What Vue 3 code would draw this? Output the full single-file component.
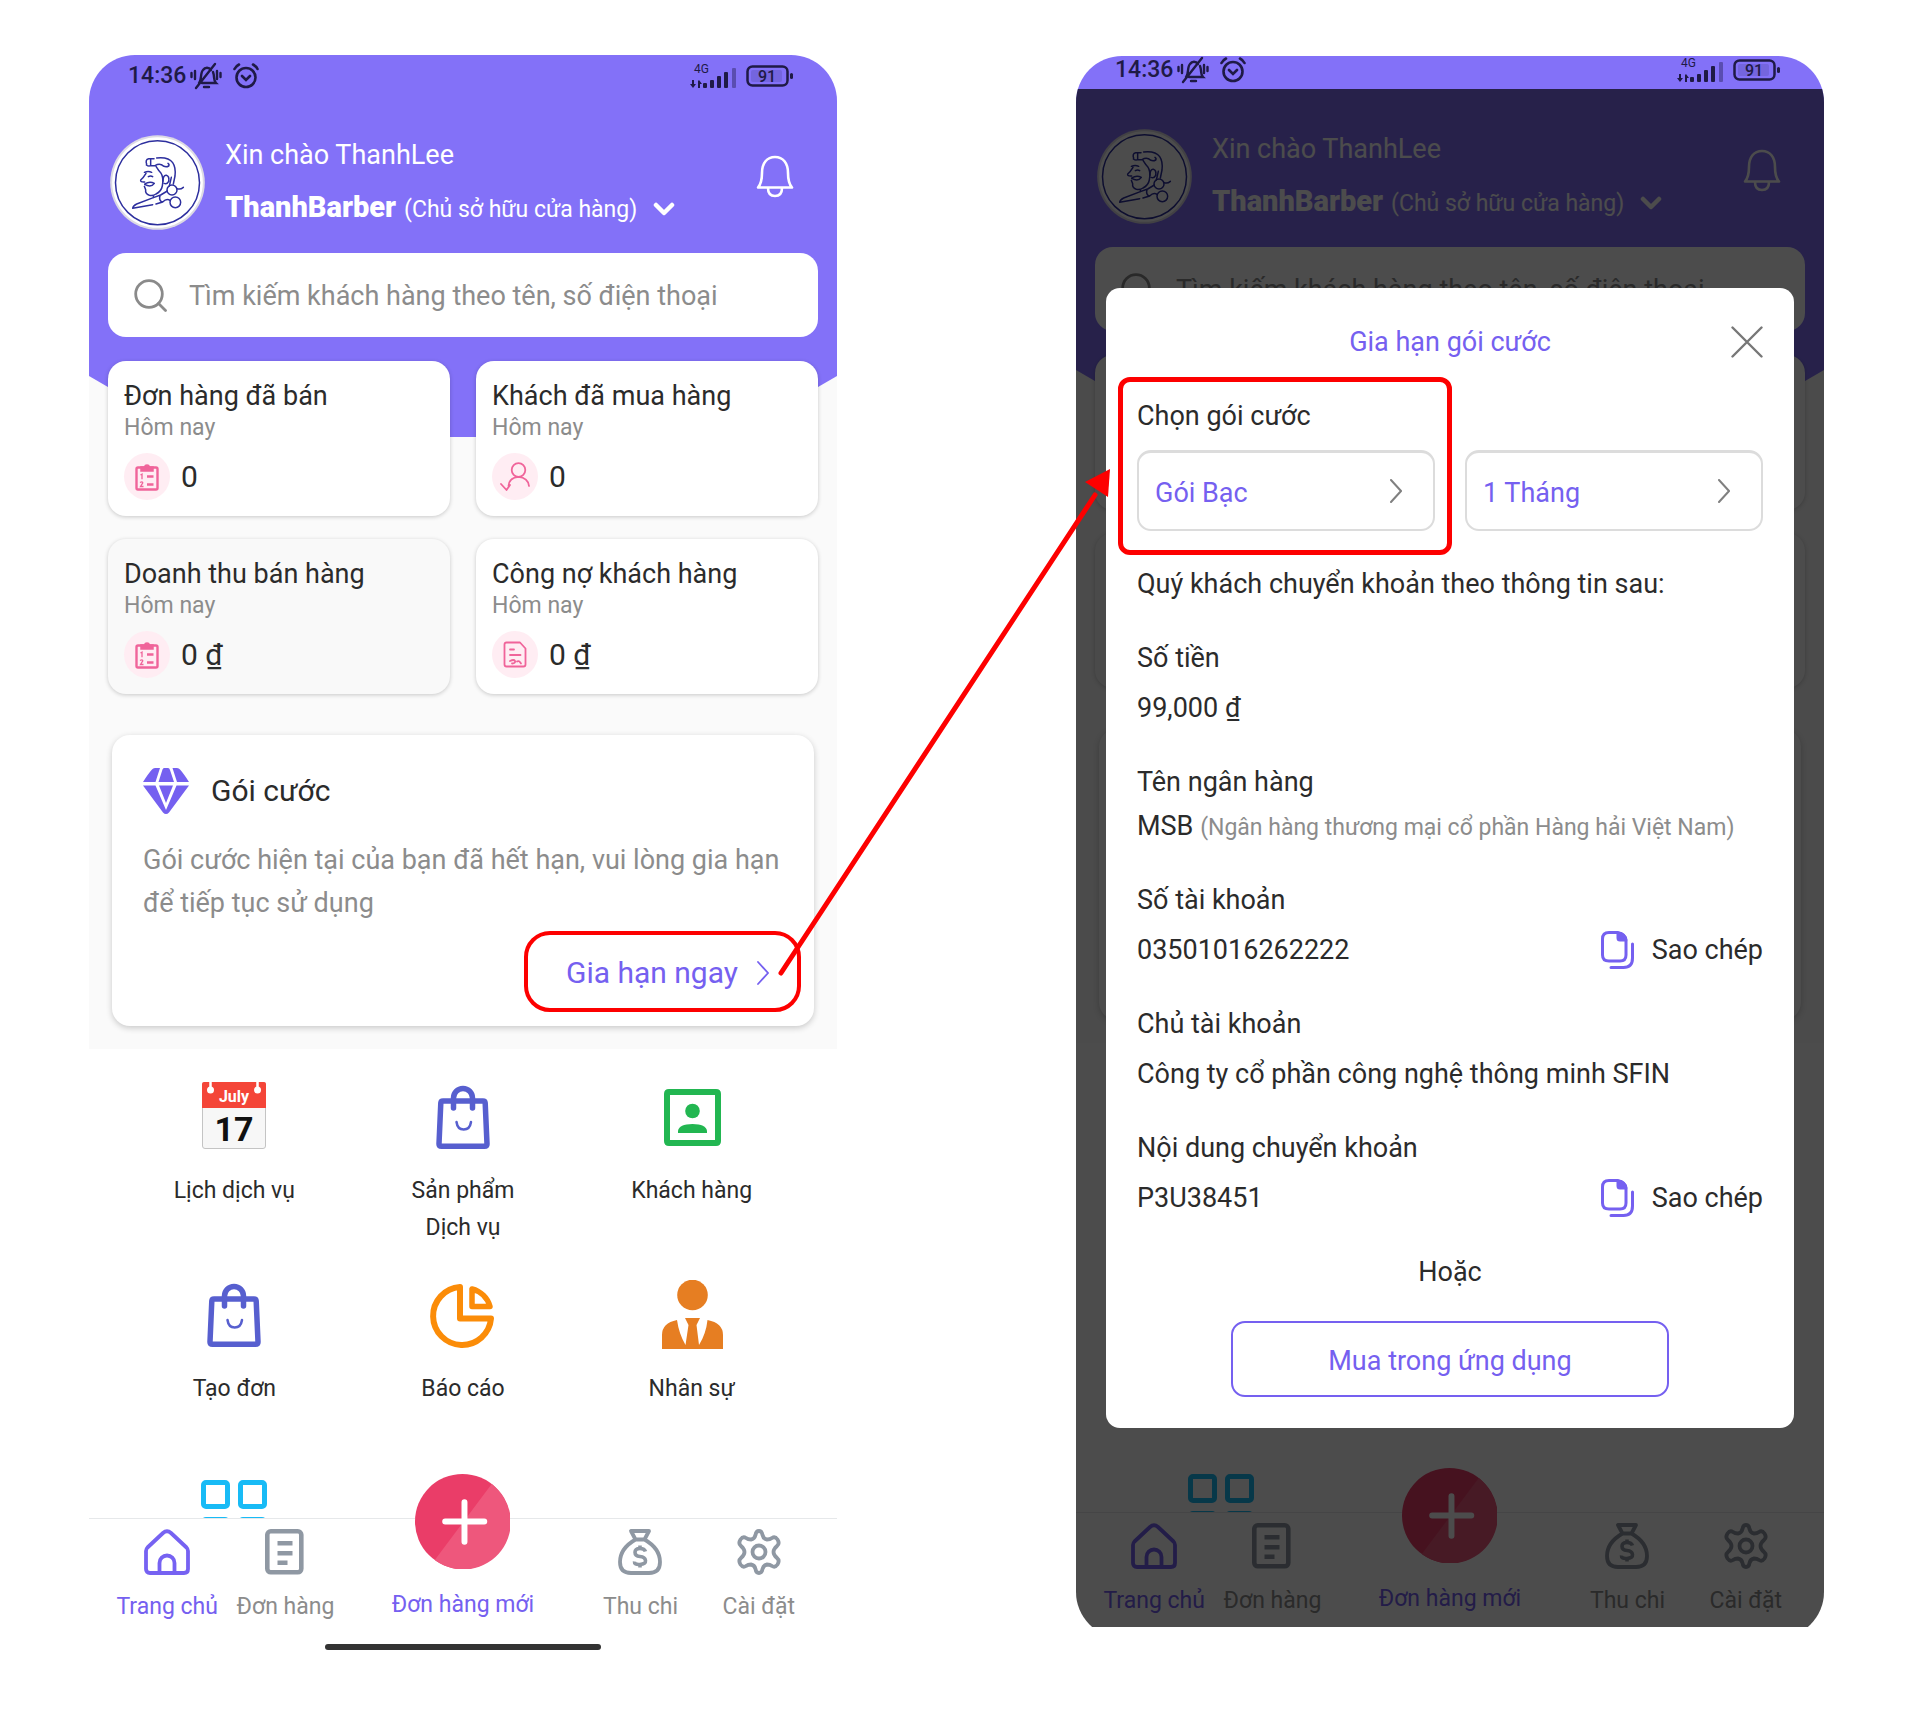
<script setup>
import { ref } from 'vue'

// 1. two screens: home, and home with the renewal dialog open
const screens = ref([
  { id: 'main', dialog: false },
  { id: 'renew', dialog: true }
])

// 2. today's numbers
const stats = ref([
  { title: 'Đơn hàng đã bán', value: '0', icon: 'board' },
  { title: 'Khách đã mua hàng', value: '0', icon: 'buyer' },
  { title: 'Doanh thu bán hàng', value: '0 ₫', icon: 'board', pressed: true },
  { title: 'Công nợ khách hàng', value: '0 ₫', icon: 'debt' }
])

// 3. shortcuts
const menu = ref([
  { icon: 'calendar', lines: ['Lịch dịch vụ'] },
  { icon: 'bag', lines: ['Sản phẩm', 'Dịch vụ'] },
  { icon: 'contact', lines: ['Khách hàng'] },
  { icon: 'bag', lines: ['Tạo đơn'] },
  { icon: 'pie', lines: ['Báo cáo'] },
  { icon: 'staff', lines: ['Nhân sự'] },
  { icon: 'grid', lines: [] }
])

// 4. bottom tabs
const tabs = ref([
  { icon: 'house', label: 'Trang chủ', active: true },
  { icon: 'order', label: 'Đơn hàng' },
  { icon: 'plus', label: 'Đơn hàng mới', active: true },
  { icon: 'money', label: 'Thu chi' },
  { icon: 'gear', label: 'Cài đặt' }
])

// 5. transfer information
const transfer = ref([
  { label: 'Số tiền', value: '99,000 ₫' },
  { label: 'Tên ngân hàng', value: 'MSB', note: '(Ngân hàng thương mại cổ phần Hàng hải Việt Nam)' },
  { label: 'Số tài khoản', value: '03501016262222', copy: true },
  { label: 'Chủ tài khoản', value: 'Công ty cổ phần công nghệ thông minh SFIN' },
  { label: 'Nội dung chuyển khoản', value: 'P3U38451', copy: true }
])

const plan = ref('Gói Bạc')
const period = ref('1 Tháng')
</script>

<template>
  <main class="board">
    <div v-for="s in screens" :key="s.id" class="frame" :class="s.id">
      <section class="phone">
        <div class="status">
          <span class="time">14:36</span>
          <svg class="st-mute" viewBox="0 0 32 28" fill="none" stroke="currentColor" stroke-width="2.4" stroke-linecap="round">
            <path d="M9 21c3-3 1-10 4-13 2-3 6-3 8 0M23 10c2 5 0 8 3 11H12M25 2L6 26" />
            <path d="M14 25h5M5 9v8M1.500 11v4M27 9v8M30.500 11v4" />
          </svg>
          <svg class="st-alarm" viewBox="0 0 26 26" fill="none" stroke="currentColor" stroke-width="2.600" stroke-linecap="round">
            <circle cx="13" cy="14.500" r="9.500" />
            <path d="M9 13l4 4 4-4M1.500 6C2.500 4 4 2.500 6 1.500M24.500 6C23.500 4 22 2.500 20 1.500" />
          </svg>
          <svg class="st-signal" viewBox="0 0 48 26" fill="currentColor">
            <text x="4" y="10" font-size="12">4G</text>
            <path d="M2 17h2v4h2l-3 4-3-4h2zM8 25h2v-4h2l-3-4-1 1z" />
            <rect x="13" y="20" width="4" height="5" rx="1" />
            <rect x="20" y="17" width="4" height="8" rx="1" />
            <rect x="27" y="13" width="4" height="12" rx="1" />
            <rect x="34" y="9" width="4" height="16" rx="1" />
            <rect x="42" y="5" width="4" height="20" rx="1" opacity=".4" />
          </svg>
          <svg class="st-battery" viewBox="0 0 48 22">
            <rect x="1.500" y="1.500" width="40" height="19" rx="5" fill="none" stroke="currentColor" stroke-width="2.500" />
            <rect x="5" y="5" width="31" height="12" rx="2" fill="currentColor" opacity=".14" />
            <rect x="44" y="8" width="3" height="6" rx="1.500" fill="currentColor" />
            <text x="21" y="17" font-size="16" font-weight="500" text-anchor="middle" fill="currentColor">91</text>
          </svg>
        </div>

        <div class="today">
          <header class="hello">
            <svg class="avatar" viewBox="30 45 285 285" fill="none" stroke="#2d2f9e" stroke-width="4.500" stroke-linecap="round" stroke-linejoin="round">
              <circle cx="172.500" cy="187.500" r="142" fill="#dcdae4" stroke="none" />
              <circle cx="172.500" cy="187.500" r="136" fill="#fff" stroke="none" />
              <circle cx="172.500" cy="188" r="126" />
              <path d="M140 133Q135 118 146 116H162M170 114Q205 110 218 128Q228 142 225 168L220 192M152 117V136M139 135Q146 140 152 137H165Q175 131 184 134Q196 144 206 138Q209 133 204 130" />
              <path d="M168 139Q176 152 182 158Q192 172 187 198Q184 214 168 222Q160 228 148 226Q135 222 137 209L133 199" />
              <path d="M133 157Q145 152 155 157M145 170Q152 166 158 170M138 160Q131 172 122 180Q120 187 134 186M134 192Q149 182 163 190Q153 204 134 193" />
              <path d="M189 184Q189 165 199 166Q209 169 206 184Q201 194 192 190M214 172L208 198" />
              <circle cx="216" cy="210" r="15" />
              <circle cx="226" cy="247" r="16" />
              <path d="M231 206Q241 210 250 202M202 213L182 225L160 233L110 252Q99 257 98 265L158 254M168 252L188 246Q200 234 211 242M180 227Q176 240 186 246M160 233V228" />
            </svg>
            <div class="who">
              <p class="greet">Xin chào ThanhLee</p>
              <button type="button" class="shop">
                <strong>ThanhBarber</strong>
                <span>(Chủ sở hữu cửa hàng)</span>
                <svg viewBox="0 0 22 14" fill="none" stroke="currentColor" stroke-width="4.500" stroke-linecap="round" stroke-linejoin="round">
                  <path d="M3 3l8 8 8-8" />
                </svg>
              </button>
            </div>
            <button type="button" class="bell">
              <svg viewBox="0 0 38 43" fill="none" stroke="currentColor" stroke-width="2.600" stroke-linejoin="round">
                <path d="M2 32.500Q6 28 6 18C6 8 11 2 19 2S32 8 32 18Q32 28 36 32.500ZM12 33Q12 41 19 41T26 33" />
              </svg>
            </button>
          </header>

          <label class="search">
            <svg viewBox="0 0 33 33" fill="none" stroke="#8a8a8a" stroke-width="2.800" stroke-linecap="round">
              <circle cx="15" cy="15" r="13.300" />
              <path d="M24.500 24.500l7 7" />
            </svg>
            <input type="text" placeholder="Tìm kiếm khách hàng theo tên, số điện thoại" />
          </label>

          <div class="stats">
            <article v-for="item in stats" :key="item.title" class="stat" :class="{ pressed: item.pressed }">
              <h3>{{ item.title }}</h3>
              <p class="day">Hôm nay</p>
              <div class="num">
                <span class="dot">
                  <svg v-if="item.icon === 'board'" viewBox="0 0 24 28" fill="none" stroke="#f0649a" stroke-width="2.400">
                    <rect x="1.500" y="4.500" width="21" height="22" rx="1.500" />
                    <path d="M6 4h3.500a2.600 2.600 0 0 1 5 0H18v4H6z" fill="#f0649a" stroke-width="1.500" />
                    <path d="M12 13.500h6.500M12 21.500h6.500" />
                    <path d="M5.500 12l1.500-.8v5M5 19.500q2.500-1.500 2.800.3L5.500 23.500h3" stroke-width="1.300" />
                  </svg>
                  <svg v-else-if="item.icon === 'buyer'" class="wide" viewBox="0 0 30 30" fill="none" stroke="#f0649a" stroke-width="1.800" stroke-linecap="round" stroke-linejoin="round">
                    <circle cx="18.500" cy="8" r="6.800" />
                    <path d="M8.500 24Q9 15.500 18.500 14.800Q28 15.500 29 24M1 22l5.500 6 3.500-5" />
                  </svg>
                  <svg v-else viewBox="0 0 24 27" fill="none" stroke="#f0649a" stroke-width="1.800" stroke-linecap="round" stroke-linejoin="round">
                    <path d="M3.500 1.500H17l5.500 6V23.500q0 2-2 2h-17q-2 0-2-2v-20q0-2 2-2z" />
                    <path d="M7 8.500h4M7 14h10.500M7 20q4-2 5 0t-3 2.500M14 20.500q2-1.500 4 2" />
                  </svg>
                </span>
                <b>{{ item.value }}</b>
              </div>
            </article>
          </div>

          <article class="package">
            <div class="package-head">
              <svg viewBox="0 0 46 46" fill="#7560f0">
                <path d="M9 1.500Q10 0 12 0H17L12.500 14H0Q5 6 9 1.500zM21 0h4q1.500 0 2 2l4 12H15.500L19.500 1.500Q20 0 21 0zM29.500 0H34q2 0 3 1.500Q41 6 46 14H34zM0 17.500H12.500L23 42l10.500-24.500H46L26 44.500Q23 47.500 20 44.500zM16 17.500H30L23 35z" />
              </svg>
              <h2>Gói cước</h2>
            </div>
            <p>Gói cước hiện tại của bạn đã hết hạn, vui lòng gia hạn để tiếp tục sử dụng</p>
            <button type="button" class="renew-btn">
              Gia hạn ngay
              <svg viewBox="0 0 12 24" fill="none" stroke="currentColor" stroke-width="1.800" stroke-linecap="round">
                <path d="M1 1l10 11L1 23" />
              </svg>
              <i class="mark"></i>
            </button>
          </article>
        </div>

        <div class="menu">
          <a v-for="(m, i) in menu" :key="i" href="#" class="entry">
            <svg v-if="m.icon === 'calendar'" viewBox="0 0 70 70">
              <rect x="3.500" y=".5" width="63" height="66" rx="2.500" fill="#f7f7f7" stroke="#c4c4c4" />
              <path d="M3 2q0-2 2-2h60q2 0 2 2v24H3z" fill="#f44538" />
              <path d="M11.500 0v7M58.500 0v7" stroke="#fff" stroke-width="2.500" />
              <circle cx="11.500" cy="8" r="3.500" fill="#fff" />
              <circle cx="58.500" cy="8" r="3.500" fill="#fff" />
              <text x="35" y="20" font-size="16" font-weight="700" text-anchor="middle" fill="#fff">July</text>
              <text x="35" y="59" font-size="34" font-weight="700" text-anchor="middle" fill="#111">17</text>
            </svg>
            <svg v-else-if="m.icon === 'bag'" viewBox="0 0 70 70" fill="none" stroke="#575fcf" stroke-width="5.500" stroke-linecap="round" stroke-linejoin="round">
              <path d="M15 19h40q2 0 2.200 2L59 62q0 2.200-2.500 2.200h-43Q11 64.200 11 62l1.800-41q.2-2 2.200-2z" />
              <path d="M25.500 26V16a9.500 9.500 0 0 1 19 0v10" />
              <path d="M28.500 40q1 7.500 7.200 7.500T43 40" stroke-width="2.500" />
            </svg>
            <svg v-else-if="m.icon === 'contact'" viewBox="0 0 70 70" fill="#22b651">
              <path fill-rule="evenodd" d="M12 7h47q5 0 5 5v47q0 5-5 5H12q-5 0-5-5V12q0-5 5-5zM13 13v45h45V13z" />
              <circle cx="35.500" cy="29" r="7.300" />
              <path d="M21 51v-2q1-7 14.500-7T50 49v2z" />
            </svg>
            <svg v-else-if="m.icon === 'pie'" viewBox="0 0 70 70" fill="none" stroke="#fb8c08" stroke-width="6" stroke-linejoin="round">
              <path d="M32 7v31.500h31A29 29 0 1 1 32 7z" />
              <path d="M44 9v17.500h18A25 25 0 0 0 44 9z" stroke-width="5.500" />
            </svg>
            <svg v-else-if="m.icon === 'staff'" viewBox="0 0 70 70" fill="#e67e22">
              <circle cx="35.500" cy="15" r="15.300" />
              <path d="M5 69V55Q5 43 20 40Q22 54 28.500 65L31.500 45 28 38H43L39.500 45 42 65Q49 54 50.500 40Q66 43 66 55V69z" />
            </svg>
            <svg v-else viewBox="0 0 70 70" fill="none" stroke="#18bbf6" stroke-width="5">
              <rect x="4.500" y="4.500" width="24" height="24" rx="2.500" />
              <rect x="41.500" y="4.500" width="24" height="24" rx="2.500" />
              <rect x="4.500" y="41.500" width="24" height="24" rx="2.500" />
              <rect x="41.500" y="41.500" width="24" height="24" rx="2.500" />
            </svg>
            <span v-for="line in m.lines" :key="line">{{ line }}</span>
          </a>
        </div>

        <nav class="tabs">
          <a v-for="t in tabs" :key="t.label" href="#" class="tab" :class="{ active: t.active }">
            <svg v-if="t.icon === 'house'" viewBox="0 0 46 46" fill="none" stroke="#7662f2" stroke-width="3.800" stroke-linejoin="round">
              <path d="M2 22q0-2 1.500-3.500L19 4q4-3.500 8 0l15.500 14.500Q44 20 44 22v18q0 4-4 4H6q-4 0-4-4zM15.500 44V34a7.500 7.500 0 0 1 15 0v10" />
            </svg>
            <svg v-else-if="t.icon === 'order'" viewBox="0 0 46 46" fill="none" stroke="#8f98a3" stroke-width="4.600">
              <rect x="5.300" y="2.300" width="34" height="41" rx="3.500" />
              <path d="M15.500 14.300h15M15.500 24.300h15M15.500 33.700h10" />
            </svg>
            <svg v-else-if="t.icon === 'plus'" class="fab" viewBox="0 0 96 96">
              <circle cx="48" cy="48" r="48" fill="#ea3d68" />
              <path d="M77.500 10A48 48 0 0 1 20 87z" fill="#ee577c" />
              <path d="M50 28.500v40M30.500 48h39.500" stroke="#fff" stroke-width="6" stroke-linecap="round" />
            </svg>
            <svg v-else-if="t.icon === 'money'" viewBox="0 0 46 46" fill="none" stroke="#8f98a3" stroke-width="3.800" stroke-linejoin="round">
              <path d="M14 2h18l-4.500 8.500h-9zM18.500 10.500C9 16 3 24 3 33q0 11 11 11h18q11 0 11-11c0-9-6-17-15.500-22.500" />
              <path d="M28.500 22.500q-1-3-5.500-3-5 0-5 3.800T23 27.500t5.500 4-5.500 4-5.500-3M23 16.500v3M23 35.500v3" stroke-width="3.600" />
            </svg>
            <svg v-else viewBox="0 0 46 46" fill="none" stroke="#8f98a3" stroke-width="3.800" stroke-linejoin="round">
              <path d="M19.500 6Q20 2 23 2t3.500 4q1 4 4.500 4.500 3 0 5-1.500 3-2 5.500 1.500 2.500 4-.5 6.500-3.500 3-3.500 6t3.500 6q3 2.500.5 6.500Q39 39 36 37q-2-1.500-5-1.500-3.500.5-4.500 4.500-.5 4-3.500 4t-3.500-4q-1-4-4.500-4.500-3 0-5 1.500-3 2-5.500-1.500-2.500-4 .5-6.500 3.500-3 3.500-6T5 17q-3-2.500-.5-6.500Q7 7 10 9q2 1.500 5 1.500 3.500-.5 4.500-4.500z" />
              <circle cx="23" cy="23" r="6.500" />
            </svg>
            <span>{{ t.label }}</span>
          </a>
        </nav>
        <div v-if="!s.dialog" class="home-bar"></div>

        <div v-if="s.dialog" class="mask">
          <form class="dialog" @submit.prevent>
            <div class="dialog-head">
              <h2>Gia hạn gói cước</h2>
              <button type="button" class="close">
                <svg viewBox="0 0 32 32" fill="none" stroke="#777" stroke-width="2.400" stroke-linecap="round">
                  <path d="M1.500 1.500l29 29M30.500 1.500l-29 29" />
                </svg>
              </button>
            </div>

            <div class="choose">
              <div class="choice">
                <label id="plan-label" for="plan">Chọn gói cước</label>
                <div class="picker">
                  <select id="plan" v-model="plan">
                    <option>Gói Bạc</option>
                  </select>
                  <svg viewBox="0 0 12 24" fill="none" stroke="#808080" stroke-width="2" stroke-linecap="round">
                    <path d="M1 1l10 11L1 23" />
                  </svg>
                </div>
                <i class="mark"></i>
              </div>
              <div class="choice">
                <div class="picker">
                  <select id="period" v-model="period" aria-labelledby="plan-label">
                    <option>1 Tháng</option>
                  </select>
                  <svg viewBox="0 0 12 24" fill="none" stroke="#808080" stroke-width="2" stroke-linecap="round">
                    <path d="M1 1l10 11L1 23" />
                  </svg>
                </div>
              </div>
            </div>

            <p class="intro">Quý khách chuyển khoản theo thông tin sau:</p>

            <div v-for="row in transfer" :key="row.label" class="info" :class="{ tight: row.note }">
              <p>{{ row.label }}</p>
              <div class="info-value">
                <p>{{ row.value }} <small v-if="row.note">{{ row.note }}</small></p>
                <button v-if="row.copy" type="button" class="copy">
                  <svg viewBox="0 0 33 38" fill="none" stroke="#7560f0" stroke-width="3" stroke-linecap="round" stroke-linejoin="round">
                    <path d="M8 1.500h8.500Q25 3 25 10v14q0 6-6 6H8q-6.500 0-6.500-6V8q0-6.500 6.500-6.500z" />
                    <path d="M17 2v5q0 2 2 2h6Q24 3 17 2z" fill="#7560f0" />
                    <path d="M31.500 13v14q0 9.500-9 9.500H10" />
                  </svg>
                  Sao chép
                </button>
              </div>
            </div>

            <p class="or">Hoặc</p>
            <button type="submit" class="buy">Mua trong ứng dụng</button>
          </form>
        </div>
      </section>
    </div>

    <!-- from the renew button to the plan picker -->
    <svg class="arrow" viewBox="0 0 338 516" fill="#fd0000">
      <path d="M5 508L319 30" stroke="#fd0000" stroke-width="5" stroke-linecap="round" />
      <path d="M334 4l-2 28-23-15z" />
    </svg>
  </main>
</template>

<style>
body {
  margin: 0;
  background: #fff;
}
</style>

<style scoped>
.board {
  position: relative;
  display: grid;
  grid-template-columns: 1fr 1fr;
  gap: 239px;
  align-items: start;
  padding: 55px 96px 56px 89px;
  font-family: Roboto, 'Noto Sans', sans-serif;
  font-size: 27px;
  line-height: 34px;
  color: #2b2b2b;
}
h2,
h3,
p {
  margin: 0;
  font-size: inherit;
  font-weight: 400;
}
svg {
  display: block;
  flex: none;
}
button {
  padding: 0;
  border: 0;
  background: none;
  font: inherit;
  color: inherit;
  cursor: pointer;
}
a {
  color: inherit;
  text-decoration: none;
}
.frame {
  overflow: hidden;
}
.phone {
  position: relative;
  overflow: hidden;
  border-radius: 46px;
  background: #fff;
}
.main .phone {
  border-radius: 46px 46px 0 0;
}
.home-bar {
  width: 276px;
  height: 6px;
  margin: 0 auto;
  border-radius: 3px;
  background: #333;
}

/* second screen is scrolled a little and cut at the bottom */
.renew {
  margin-top: 1px;
}
.renew .phone {
  margin-bottom: -11px;
}
.renew .status {
  margin-top: -7px;
}

.status {
  display: flex;
  align-items: center;
  box-sizing: border-box;
  height: 40px;
  padding: 2px 43px 0 39px;
  background: #8371f8;
  color: #1f1a46;
}
.time {
  font-size: 23px;
  font-weight: 500;
}
.st-mute {
  width: 32px;
  margin-left: 4px;
}
.st-alarm {
  width: 26px;
  margin-left: 11px;
}
.st-signal {
  width: 48px;
  margin-left: auto;
}
.st-battery {
  width: 48px;
  margin-left: 8px;
}

.today {
  position: relative;
  z-index: 0;
  padding: 40px 19px 23px;
  background: #fafafa;
}
.today::before {
  content: '';
  position: absolute;
  z-index: -1;
  top: 0;
  left: 0;
  right: 0;
  height: 342px;
  background: #8371f8;
  clip-path: polygon(0 0, 100% 0, 100% 281px, calc(100% - 105px) 100%, 105px 100%, 0 281px);
}
.hello {
  display: flex;
  align-items: center;
  padding: 0 24px 0 2px;
  color: #fff;
}
.avatar {
  width: 95px;
  height: 95px;
}
.who {
  flex: 1;
  display: flex;
  flex-direction: column;
  align-items: flex-start;
  gap: 16px;
  margin-left: 20px;
  line-height: 36px;
}
.shop {
  display: flex;
  align-items: baseline;
  gap: 8px;
}
.shop strong {
  font-size: 29px;
  font-weight: 900;
}
.shop span {
  font-size: 23px;
}
.shop svg {
  width: 22px;
  margin-left: 8px;
  align-self: center;
}
.bell {
  align-self: flex-start;
  margin-top: 20px;
}
.bell svg {
  width: 38px;
}
.search {
  display: flex;
  align-items: center;
  gap: 22px;
  height: 84px;
  margin-top: 23px;
  padding: 0 26px;
  border-radius: 18px;
  background: #fff;
}
.search svg {
  width: 33px;
}
.search input {
  flex: 1;
  min-width: 0;
  padding: 2px 0 0;
  border: 0;
  outline: 0;
  background: none;
  font: inherit;
}
.search input::placeholder {
  color: #8c8c8c;
  opacity: 1;
}

.stats {
  display: grid;
  grid-template-columns: 1fr 1fr;
  gap: 23px 26px;
  margin-top: 24px;
}
.stat {
  padding: 18px 16px 16px;
  border-radius: 18px;
  background: #fff;
  box-shadow: 0 1px 4px rgba(0, 0, 0, 0.2);
}
.pressed {
  background: #f9f9f9;
}
.day {
  font-size: 23px;
  line-height: 30px;
  color: #8c8c8c;
}
.num {
  display: flex;
  align-items: center;
  gap: 11px;
  margin-top: 10px;
}
.num b {
  font-size: 30px;
  font-weight: 400;
}
.dot {
  display: flex;
  align-items: center;
  justify-content: center;
  width: 46px;
  height: 47px;
  border-radius: 50%;
  background: #ffedf3;
}
.dot svg {
  width: 24px;
}
.dot .wide {
  width: 30px;
}

.package {
  margin: 41px 4px 0;
  padding: 33px 31px 35px;
  border-radius: 18px;
  background: #fff;
  box-shadow: 0 2px 6px rgba(0, 0, 0, 0.2);
}
.package-head {
  display: flex;
  align-items: center;
  gap: 22px;
  font-size: 30px;
}
.package-head svg {
  width: 46px;
}
.package p {
  margin-top: 25px;
  line-height: 43px;
  color: #8c8c8c;
}
.renew-btn {
  position: relative;
  display: flex;
  align-items: center;
  gap: 19px;
  margin: 30px 14px 0 auto;
  font-size: 30px;
  line-height: 36px;
  color: #7560f0;
}
.renew-btn svg {
  width: 12px;
}
.mark {
  position: absolute;
  box-sizing: border-box;
  border: 4px solid #fd0000;
  pointer-events: none;
}
.renew-btn .mark {
  inset: -24px -32px -21px -42px;
  border-radius: 26px;
}

.menu {
  display: grid;
  grid-template-columns: repeat(3, 1fr);
  grid-auto-rows: 198px;
  box-sizing: border-box;
  height: 469px;
  padding: 33px 31px 0;
  overflow: hidden;
}
.entry {
  display: flex;
  flex-direction: column;
  align-items: center;
  font-size: 23px;
  line-height: 37px;
}
.entry svg {
  width: 70px;
  margin-bottom: 20px;
}
.tabs {
  position: relative;
  display: grid;
  grid-template-columns: 1fr 1fr 2fr 1fr 1fr;
  box-sizing: border-box;
  height: 126px;
  padding: 10px 19px 0;
  border-top: 1px solid #e6e8ea;
  background: #fff;
}
.tab {
  display: flex;
  flex-direction: column;
  align-items: center;
  gap: 17px;
  font-size: 23px;
  line-height: 30px;
  color: #8c8c8c;
  white-space: nowrap;
}
.tab svg {
  width: 46px;
}
.tab .fab {
  width: 95px;
  margin-top: -55px;
  margin-bottom: 4px;
}
.tab.active {
  color: #7560f0;
}

.mask {
  position: absolute;
  inset: 33px 0 0;
  padding: 199px 30px 0;
  background: rgba(0, 0, 0, 0.7);
}
.dialog {
  padding: 37px 31px 31px;
  border-radius: 14px;
  background: #fff;
}
.dialog-head {
  position: relative;
  text-align: center;
  color: #7560f0;
}
.close {
  position: absolute;
  top: 1px;
  right: 0;
}
.close svg {
  width: 32px;
}
.choose {
  display: grid;
  grid-template-columns: 1fr 1fr;
  gap: 30px;
  align-items: end;
  margin-top: 40px;
}
.choice {
  position: relative;
}
.choice label {
  display: block;
  margin-bottom: 17px;
}
.choice .mark {
  inset: -22px -17px -24px -19px;
  border-width: 5px;
  border-radius: 12px;
}
.picker {
  position: relative;
}
.picker select {
  display: block;
  width: 100%;
  height: 81px;
  padding: 3px 16px 0;
  border: 2px solid #dcdcdc;
  border-top-width: 3px;
  border-radius: 14px;
  appearance: none;
  background: #fff;
  font: inherit;
  color: #7560f0;
}
.picker svg {
  position: absolute;
  top: 29px;
  right: 33px;
  width: 12px;
  pointer-events: none;
}
.intro {
  margin-top: 36px;
}
.info {
  display: flex;
  flex-direction: column;
  gap: 16px;
  margin-top: 40px;
}
.tight {
  gap: 10px;
}
.info-value {
  display: flex;
  justify-content: space-between;
  height: 34px;
}
.info small {
  font-size: 23px;
  color: #8c8c8c;
}
.copy {
  display: flex;
  align-items: center;
  gap: 18px;
}
.copy svg {
  width: 33px;
}
.or {
  margin-top: 40px;
  text-align: center;
}
.buy {
  display: block;
  width: 70%;
  height: 76px;
  margin: 32px auto 0;
  padding-top: 3px;
  border: 2px solid #7560f0;
  border-radius: 14px;
  color: #7560f0;
}

.arrow {
  position: absolute;
  top: 465px;
  left: 50%;
  width: 338px;
  margin-left: -184px;
  pointer-events: none;
}
</style>
